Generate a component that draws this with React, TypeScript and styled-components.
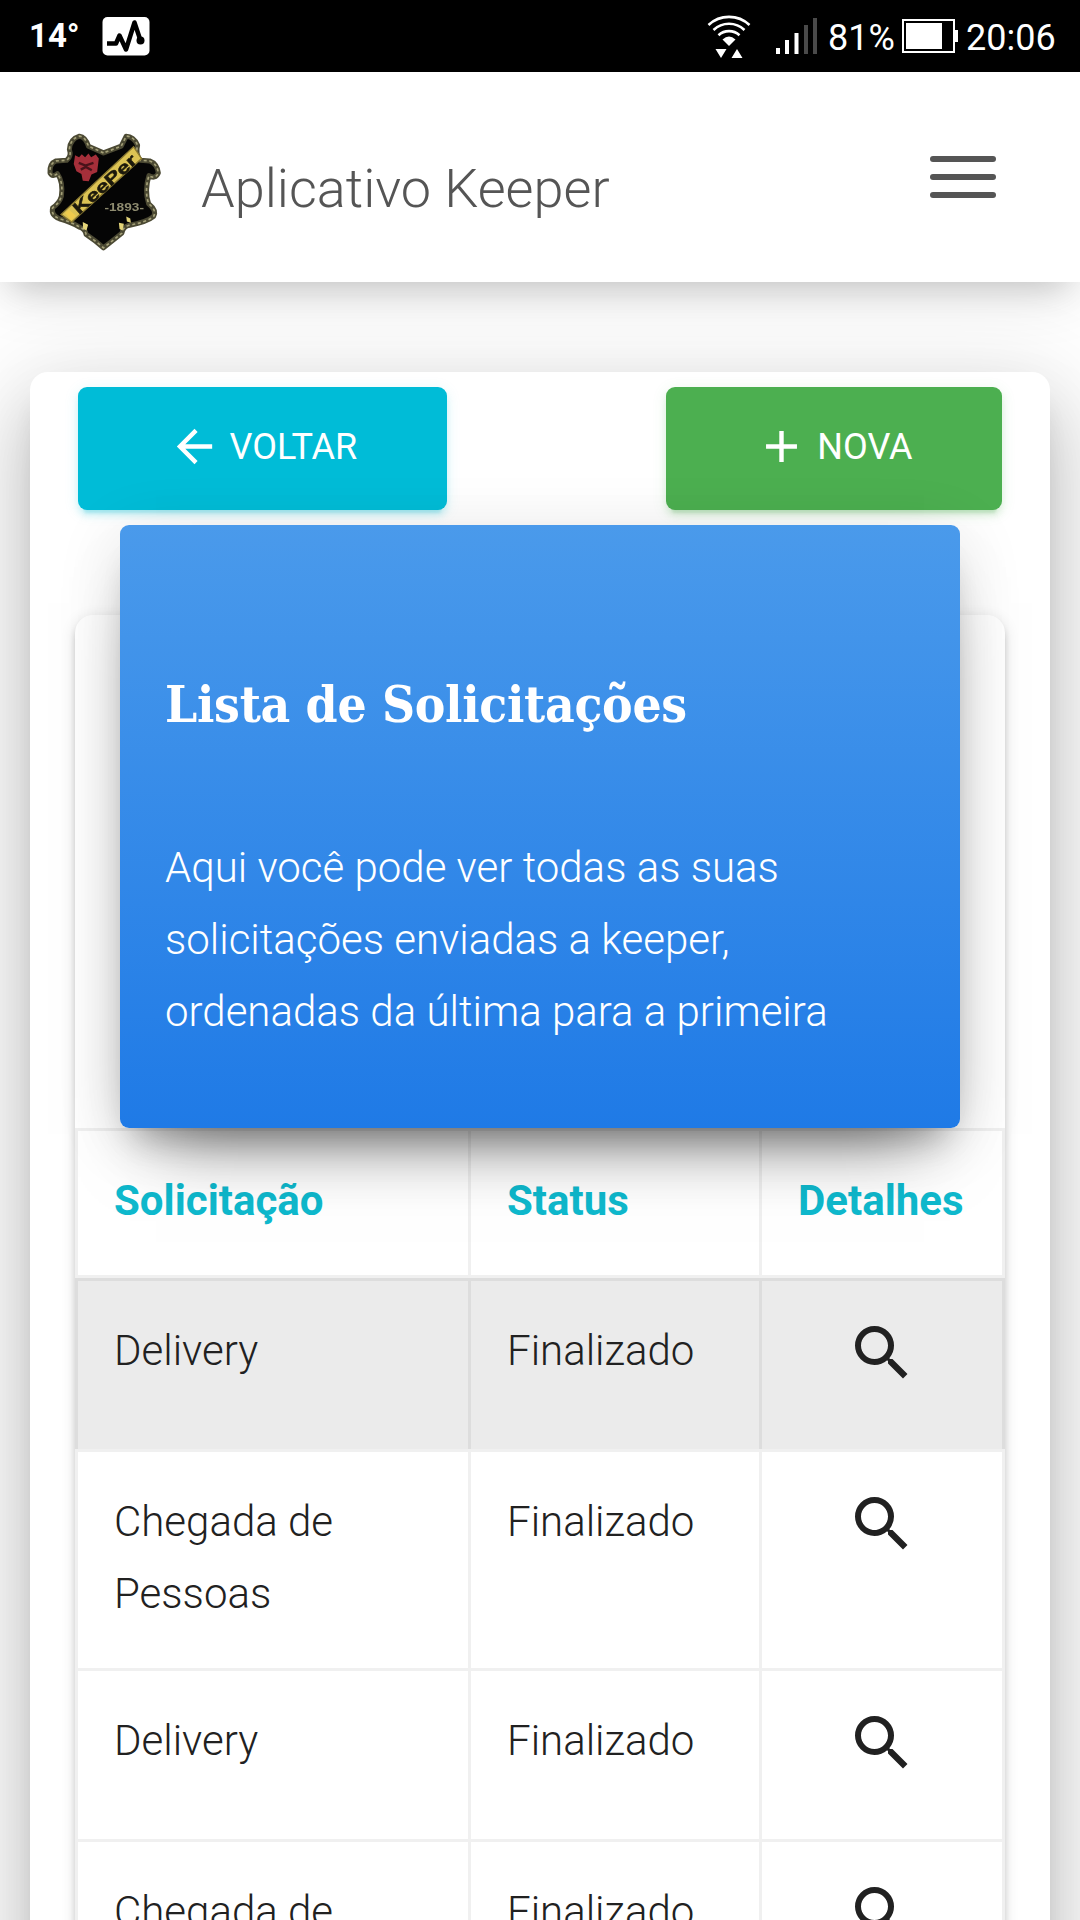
import React from 'react';
import styled, { createGlobalStyle } from 'styled-components';
import { MdAdd, MdArrowBack, MdSearch } from 'react-icons/md';


const GlobalStyle = createGlobalStyle`
  * {
    box-sizing: border-box;
  }
  body {
    margin: 0;
    background-color: #fff;
    font-family: Roboto, "Liberation Sans", sans-serif;
    font-weight: 300;
  }
`

const Page = styled.div`
    display: flex;
    flex-direction: column;
    width: 1080px;
    height: 1920px;
    overflow: hidden;
`

const StatusBar = styled.div`
    flex: none;
    z-index: 3;
    display: flex;
    justify-content: space-between;
    height: 72px;
    padding: 0 25px 0 29px;
    background-color: #000;
    color: #fff;
`

const StatusGroup = styled.div`
    display: flex;
    align-items: center;
`

const Temperature = styled.span`
    width: 73px;
    padding-bottom: 1px;
    font-size: 33px;
    font-weight: 700;
`

const StatusText = styled.span<{ $width: number }>`
    width: ${({ $width }) => $width}px;
    padding-top: 3px;
    font-size: 36px;
    font-weight: 400;
    white-space: nowrap;
`

const StatusIcon = styled.svg<{ $gap?: number }>`
    flex: none;
    margin-right: ${({ $gap = 0 }) => $gap}px;
`

const NavBar = styled.header`
    flex: none;
    z-index: 2;
    display: flex;
    align-items: flex-start;
    height: 210px;
    padding: 58px 84px 0 45px;
    background-color: #fff;
    box-shadow: 0 12px 54px 0 rgba(0, 0, 0, 0.12), 0 21px 30px -15px rgba(0, 0, 0, 0.15);
`

const Logo = styled.svg`
    flex: none;
    filter: blur(0.6px);
`

const Brand = styled.span`
    flex: 1;
    margin: 27px 0 0 39px;
    color: #555;
    font-size: 54px;
    line-height: 64px;
`

const Toggler = styled.button`
    display: flex;
    flex-direction: column;
    gap: 12px;
    margin-top: 26px;
    padding: 0;
    border: 0;
    background: none;
`

const TogglerBar = styled.span`
    width: 66px;
    height: 6px;
    border-radius: 3px;
    background-color: #555;
`

const Main = styled.main`
    flex: 1 0 auto;
    margin: 90px 30px 0;
    padding: 15px 45px 0;
    border-radius: 18px;
    background-color: #fff;
    box-shadow: 0 48px 72px 6px rgba(0, 0, 0, 0.14), 0 18px 90px 15px rgba(0, 0, 0, 0.12),
        0 24px 30px -15px rgba(0, 0, 0, 0.2);
`

const Actions = styled.div`
    display: flex;
    justify-content: space-between;
    padding: 0 3px;
`

const Button = styled.button<{ $color: string; $shadow: string }>`
    display: flex;
    align-items: center;
    gap: 9px;
    height: 123px;
    padding: 0 89.5px 4px;
    border: 0;
    border-radius: 9px;
    background-color: ${({ $color }) => $color};
    box-shadow: 0 6px 6px 0 rgba(${({ $shadow }) => $shadow}, 0.14), 0 9px 3px -6px rgba(${({ $shadow }) => $shadow}, 0.2),
        0 3px 15px 0 rgba(${({ $shadow }) => $shadow}, 0.12);
    color: #fff;
    font-family: inherit;
    font-size: 36px;
    font-weight: 400;
    text-transform: uppercase;
`

const Card = styled.section`
    margin-top: 105px;
    border-radius: 18px;
    background-color: #fff;
    box-shadow: 0 6px 6px 0 rgba(0, 0, 0, 0.14), 0 9px 3px -6px rgba(0, 0, 0, 0.2), 0 3px 15px 0 rgba(0, 0, 0, 0.12);
`

/* the header sticks out of the top of the card */
const CardHeader = styled.div`
    height: 603px;
    margin: 0 45px -90px;
    padding: 142px 45px 0;
    transform: translateY(-90px);
    border-radius: 9px;
    background: linear-gradient(#4a9aeb, #1f7ae6);
    box-shadow: 0 42px 72px -36px rgba(0, 0, 0, 0.56), 0 12px 66px 0 rgba(0, 0, 0, 0.12),
        0 24px 30px -15px rgba(0, 0, 0, 0.2);
    color: #fff;
`

const CardTitle = styled.h3`
    margin: 0;
    font-family: "DejaVu Serif Condensed", "DejaVu Serif", serif;
    font-stretch: condensed;
    font-size: 51px;
    font-weight: 700;
    line-height: 75px;
    letter-spacing: -0.3px;
    white-space: nowrap;
`

const CardText = styled.p`
    margin: 90px 0 0;
    font-size: 42px;
    line-height: 72px;
`

const Row = styled.div<{ $active?: boolean }>`
    display: grid;
    grid-template-columns: 396px 291px 243px;
    background-color: ${({ $active }) => ($active ? '#ebebeb' : 'transparent')};
`

const Cell = styled.div`
    padding: 34px 36px 38px;
    border-top: 3px solid rgba(0, 0, 0, 0.06);
    border-right: 3px solid rgba(0, 0, 0, 0.06);
    color: #212121;
    font-size: 42px;
    line-height: 72px;

    &:first-child {
        border-left: 3px solid rgba(0, 0, 0, 0.06);
    }
`

const HeadCell = styled(Cell)`
    border-bottom: 3px solid rgba(0, 0, 0, 0.06);
    color: #0fb9cd;
    font-weight: 700;
`

const IconCell = styled(Cell)`
    display: flex;
    justify-content: center;
    padding: 36px 0 60px;
`

const solicitacoes = [
    { nome: 'Delivery', status: 'Finalizado' },
    { nome: 'Chegada de Pessoas', status: 'Finalizado' },
    { nome: 'Delivery', status: 'Finalizado' },
    { nome: 'Chegada de Pessoas', status: 'Finalizado' },
]

const ActivityIcon = () => (
    <StatusIcon width="48" height="40" viewBox="0 0 48 40">
      <rect x="0.5" y="1" width="47" height="38.500" rx="5" fill="#fff" />
      <path d="M5 27.500h9l3.500-8 6.500 14 8.500-27 6 18" fill="none" stroke="#000" strokeWidth="4.500" strokeLinejoin="round" />
      <circle cx="38.500" cy="24.500" r="4" fill="#000" />
    </StatusIcon>
)

const WifiIcon = () => (
    <StatusIcon $gap={25} width="44" height="44" viewBox="0 0 44 44">
      <g fill="none" stroke="#fff" strokeWidth="2.600">
        <path d="M1.500 11a30 30 0 0 1 41 0" />
        <path d="M6.500 16a22.500 22.500 0 0 1 31 0" />
        <path d="M11.500 21.200a15.500 15.500 0 0 1 21 0" />
      </g>
      <path d="M15.500 25.500q6.500-6 13 0L22 32z" fill="#fff" />
      <path d="M8.500 35h11L14 44zM24.500 44h11L30 35z" fill="#fff" />
    </StatusIcon>
)

const SignalIcon = () => (
    <StatusIcon $gap={10} width="42" height="38" viewBox="0 0 42 38">
      <path d="M0 31h4v6H0zM9 23h4v14H9zM18.500 16h4v21h-4z" fill="#fff" />
      <path d="M28 8h4v29h-4zM37 1h4v36h-4z" fill="#4a4a4a" />
    </StatusIcon>
)

const BatteryIcon = () => (
    <StatusIcon $gap={8} width="56" height="34" viewBox="0 0 56 34">
      <rect x="1" y="1" width="51" height="32" fill="none" stroke="#fff" strokeWidth="2" />
      <path d="M4 4h36v26H4zM52 11h4v12h-4z" fill="#fff" />
    </StatusIcon>
)

const crest = 'M250 128L205 108Q196 80 178 78Q150 86 148 118Q155 138 140 150L108 152Q88 160 90 188Q98 202 112 190Q130 215 124 258Q118 278 98 292Q92 315 118 325Q155 335 178 350Q195 355 198 372Q225 390 250 412Q278 390 305 368Q308 350 325 345Q380 335 400 318Q410 300 385 280Q372 240 386 196Q405 208 414 188Q410 160 388 152L360 150Q345 130 352 105Q340 78 318 78L303 108Z'

const Crest = () => (
    <Logo width="117" height="124" viewBox="75 60 350 370">
      <path d={crest} fill="#050505" stroke="#4b4933" strokeWidth="15" strokeLinejoin="round" />
      <path d={crest} fill="none" stroke="#a5a179" strokeWidth="5" strokeDasharray="9 8" />
      <path d="M165 135l12 6 8-9 10 9 10-11 8 11 14-8 9 12-5 40-17 8-8 20-18-2-4-20-15-8-8-22z" fill="#a52f3a" />
      <path d="M176 158l20 8 24-8M182 178l15-8 18 10" fill="none" stroke="#48131a" strokeWidth="7" />
      <path d="M123 312L340 110L364 145L155 335Z" fill="#dcc354" stroke="#8b7a31" strokeWidth="4" />
      <path d="M135 308l12-10 20 18-14 14z" fill="#efcb4d" />
      <text x="177" y="314" transform="rotate(-42 177 314)" textLength="238" lengthAdjust="spacingAndGlyphs" fill="#1c190c" stroke="#1c190c" strokeWidth="1.500" fontFamily="Liberation Sans, sans-serif" fontSize="50" fontWeight="700">KeePer</text>
      <text x="253" y="301" textLength="118" lengthAdjust="spacingAndGlyphs" fill="#8f8c70" fontFamily="Liberation Sans, sans-serif" fontSize="34" fontWeight="700">-1893-</text>
      <path d="M188 335l16 8-5 17-10-5zM296 337l15 3-4 20-9-4zM318 318l12 6 2 13-12-4z" fill="#e3d478" />
    </Logo>
)

export default function App() {
    return (
      <>
      <GlobalStyle />
      <Page>
        <StatusBar>
          <StatusGroup>
            <Temperature>14°</Temperature>
            <ActivityIcon />
          </StatusGroup>
          <StatusGroup>
            <WifiIcon />
            <SignalIcon />
            <StatusText $width={74}>81%</StatusText>
            <BatteryIcon />
            <StatusText $width={89}>20:06</StatusText>
          </StatusGroup>
        </StatusBar>
        <NavBar>
          <Crest />
          <Brand>Aplicativo Keeper</Brand>
          <Toggler aria-label="Menu">
            <TogglerBar />
            <TogglerBar />
            <TogglerBar />
          </Toggler>
        </NavBar>
        <Main>
          <Actions>
            <Button $color="#00bcd7" $shadow="0, 188, 212">
              <MdArrowBack size={53} /> Voltar
            </Button>
            <Button $color="#4caf50" $shadow="76, 175, 80">
              <MdAdd size={53} /> Nova
            </Button>
          </Actions>
          <Card>
            <CardHeader>
              <CardTitle>Lista de Solicitações</CardTitle>
              <CardText>Aqui você pode ver todas as suas solicitações enviadas a keeper, ordenadas da última para a primeira</CardText>
            </CardHeader>
            <Row>
              <HeadCell>Solicitação</HeadCell>
              <HeadCell>Status</HeadCell>
              <HeadCell>Detalhes</HeadCell>
            </Row>
            {solicitacoes.map((item, i) => (
              <Row key={i} $active={i === 0}>
                <Cell>{item.nome}</Cell>
                <Cell>{item.status}</Cell>
                <IconCell><MdSearch size={72} /></IconCell>
              </Row>
            ))}
          </Card>
        </Main>
      </Page>
      </>
    );
}
